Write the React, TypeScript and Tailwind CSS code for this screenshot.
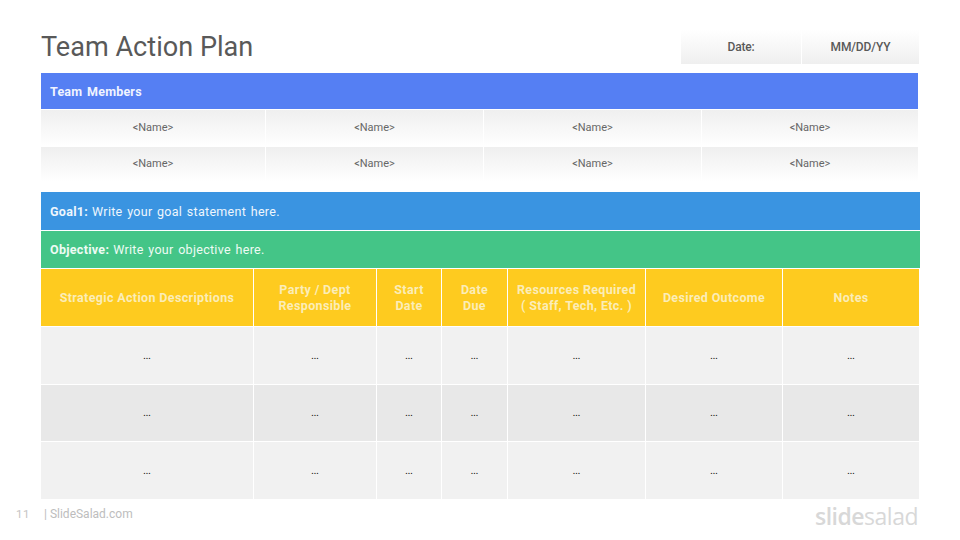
const members = ['<Name>', '<Name>', '<Name>', '<Name>']

const columns = [
  { label: ['Strategic Action Descriptions'], width: 'w-[212px]' },
  { label: ['Party / Dept', 'Responsible'], width: 'w-[122px]' },
  { label: ['Start', 'Date'], width: 'w-[64px]' },
  { label: ['Date', 'Due'], width: 'w-[65px]' },
  { label: ['Resources Required', '( Staff, Tech, Etc. )'], width: 'w-[137px]' },
  { label: ['Desired Outcome'], width: 'w-[136px]' },
  { label: ['Notes'], width: 'w-[136px]' },
]

const rowColors = ['bg-[#f1f1f1]', 'bg-[#e8e8e8]', 'bg-[#f1f1f1]']

function MemberRow({ className }: { className: string }) {
  return (
    <div className={`flex gap-px ${className}`}>
      {members.map((name, i) => (
        <div
          key={i}
          className={`flex items-center justify-center bg-gradient-to-b from-[#efefef] to-white text-[11px] text-[#666666] ${
            i === 0 ? 'w-[224px]' : i === 1 ? 'w-[217px]' : i === 2 ? 'w-[217px]' : 'w-[216px]'
          }`}
        >
          {name}
        </div>
      ))}
    </div>
  )
}

export default function App() {
  return (
    <div className="flex h-[540px] w-[960px] flex-col overflow-hidden bg-white pl-[41px] font-['Roboto',sans-serif]">
      {/* Title + date */}
      <div className="flex h-[73px] w-[878px] items-start justify-between">
        <h1 className="mt-[29px] text-[27.1px] leading-[36px] font-normal text-[#595959]">Team Action Plan</h1>
        <div className="mt-[30px] flex h-[34px] gap-px text-[12px] font-medium text-[#595959]">
          <div className="flex w-[120px] items-center justify-center bg-gradient-to-b from-white to-[#efefef] tracking-[-0.2px]">Date:</div>
          <div className="flex w-[117px] items-center justify-center bg-gradient-to-b from-white to-[#efefef] tracking-[-0.1px]">MM/DD/YY</div>
        </div>
      </div>

      {/* Team members */}
      <div className="flex h-[36px] w-[877px] items-center bg-[#557ff3] pt-[3px] pl-[9px] text-[12.5px] font-bold tracking-[0.2px] text-[#f0f4ff] [word-spacing:1.5px]">
        Team Members
      </div>
      <div className="mt-px flex w-[877px] flex-col gap-px">
        <MemberRow className="h-[36px]" />
        <MemberRow className="h-[35px]" />
      </div>

      {/* Goal + objective */}
      <div className="mt-[10px] flex h-[38px] w-[879px] items-center bg-[#3a94e1] pt-[2px] pl-[9px] text-[12.5px] tracking-[0.3px] text-[#eef6fd] [word-spacing:1.2px]">
        <b className="mr-1 font-bold">Goal1:</b> Write your goal statement here.
      </div>
      <div className="mt-px flex h-[37px] w-[879px] items-center bg-[#44c587] pt-[2px] pl-[9px] text-[12.5px] tracking-[0.3px] text-[#eefbf4] [word-spacing:1.2px]">
        <b className="mr-1 font-bold">Objective:</b> Write your objective here.
      </div>

      {/* Action table */}
      <div className="mt-px flex h-[57px] gap-px">
        {columns.map((col, i) => (
          <div
            key={i}
            className={`flex shrink-0 flex-col items-center justify-center bg-[#fecb1f] pt-px text-center text-[12.5px] leading-[16px] font-bold tracking-[0.35px] text-[#fbedb8] ${col.width}`}
          >
            {col.label.map((line) => (
              <span key={line} className="whitespace-nowrap">{line}</span>
            ))}
          </div>
        ))}
      </div>
      {rowColors.map((color, r) => (
        <div key={r} className="mt-px flex h-[56.5px] gap-px">
          {columns.map((col, i) => (
            <div
              key={i}
              className={`flex shrink-0 items-center justify-center pt-[2px] text-[9px] font-medium text-[#111111] ${color} ${col.width}`}
            >
              ...
            </div>
          ))}
        </div>
      ))}

      {/* Footer */}
      <div className="relative mt-[3px] flex w-[877px] items-start">
        <span className="ml-[-25px] w-[28px] text-[11.5px] leading-[24px] tracking-[0.6px] text-[#c4c4c4]">11</span>
        <span className="text-[12px] leading-[24px] text-[#bdbdbd]">| SlideSalad.com</span>
        <span className="ml-auto mt-[-2px] font-['Open_Sans',sans-serif] text-[23px] leading-[32px] tracking-[-0.5px] text-[#d8d8d8]">
          <span className="font-semibold">slide</span>
          <span className="font-normal">salad</span>
        </span>
      </div>
    </div>
  )
}
